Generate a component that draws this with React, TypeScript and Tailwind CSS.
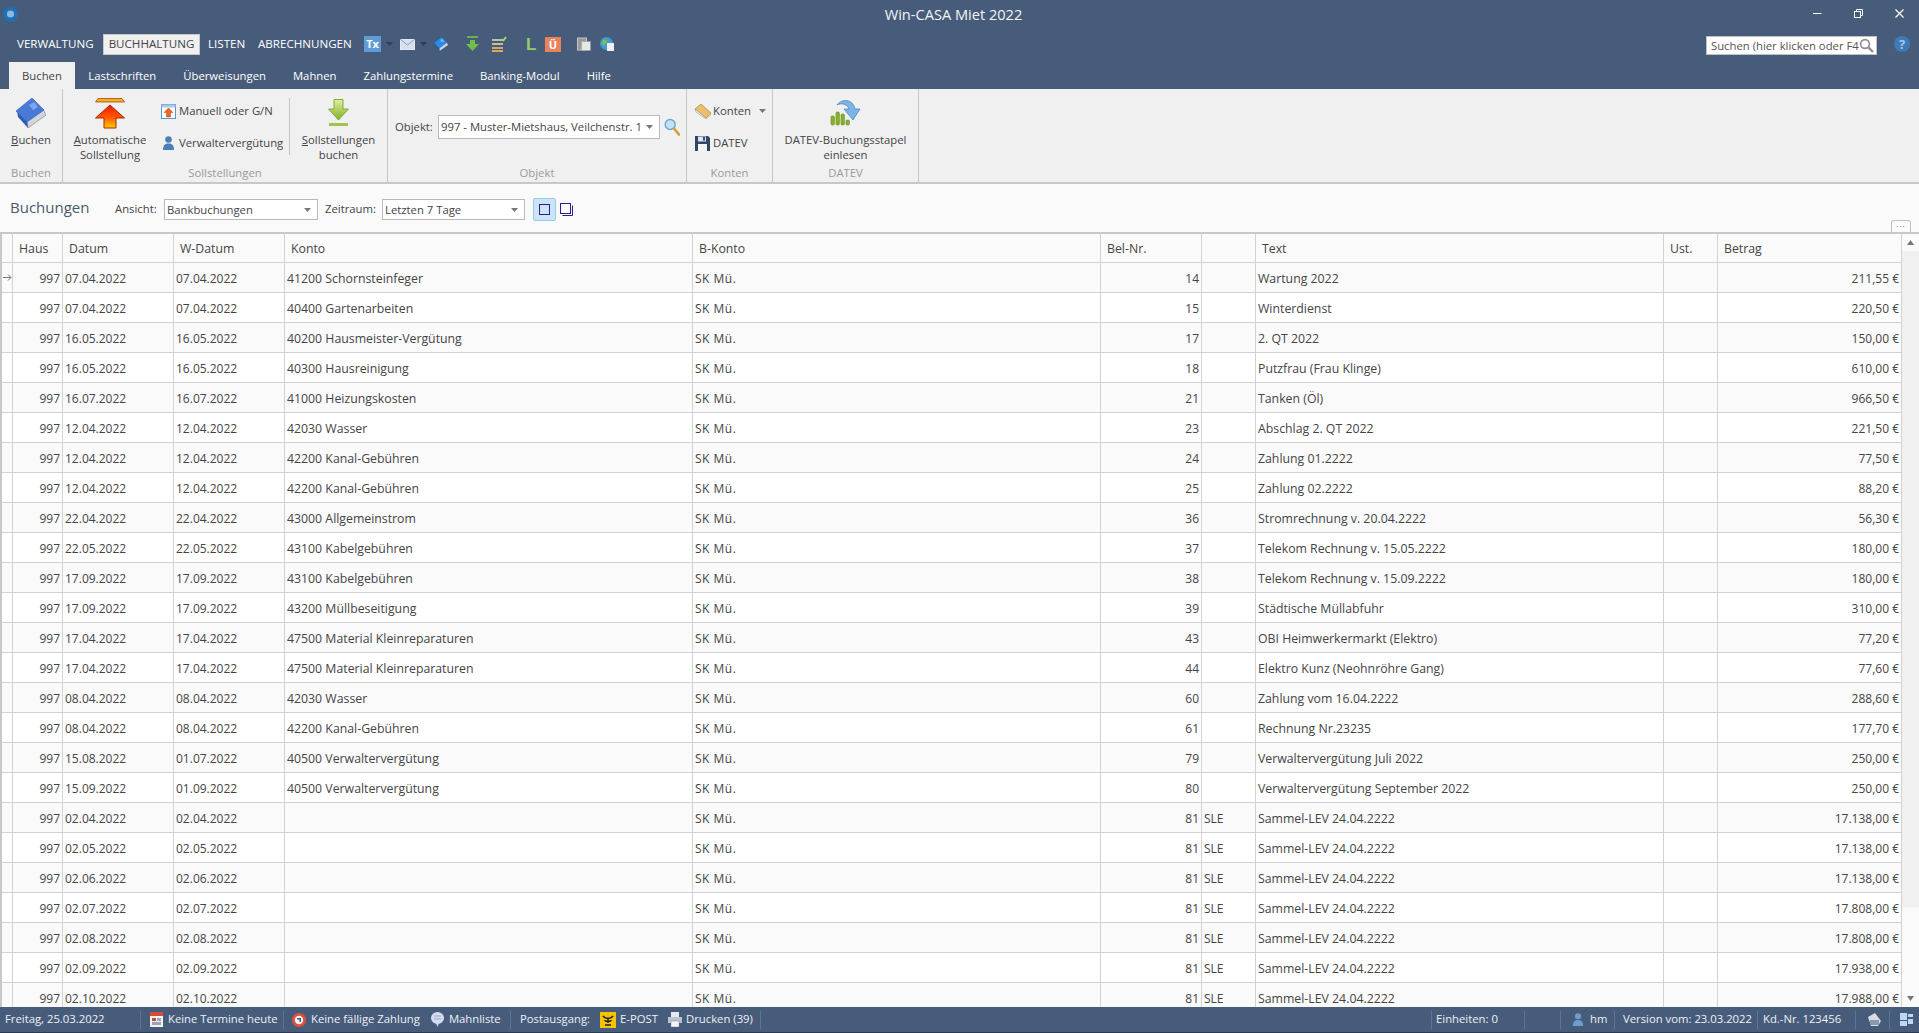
import React from "react";

const ROWS: [string, string, string, string, string, string, string][] = [
  ["07.04.2022","07.04.2022","41200 Schornsteinfeger","14","","Wartung 2022","211,55 €"],
  ["07.04.2022","07.04.2022","40400 Gartenarbeiten","15","","Winterdienst","220,50 €"],
  ["16.05.2022","16.05.2022","40200 Hausmeister-Vergütung","17","","2. QT 2022","150,00 €"],
  ["16.05.2022","16.05.2022","40300 Hausreinigung","18","","Putzfrau (Frau Klinge)","610,00 €"],
  ["16.07.2022","16.07.2022","41000 Heizungskosten","21","","Tanken (Öl)","966,50 €"],
  ["12.04.2022","12.04.2022","42030 Wasser","23","","Abschlag 2. QT 2022","221,50 €"],
  ["12.04.2022","12.04.2022","42200 Kanal-Gebühren","24","","Zahlung 01.2222","77,50 €"],
  ["12.04.2022","12.04.2022","42200 Kanal-Gebühren","25","","Zahlung 02.2222","88,20 €"],
  ["22.04.2022","22.04.2022","43000 Allgemeinstrom","36","","Stromrechnung v. 20.04.2222","56,30 €"],
  ["22.05.2022","22.05.2022","43100 Kabelgebühren","37","","Telekom Rechnung v. 15.05.2222","180,00 €"],
  ["17.09.2022","17.09.2022","43100 Kabelgebühren","38","","Telekom Rechnung v. 15.09.2222","180,00 €"],
  ["17.09.2022","17.09.2022","43200 Müllbeseitigung","39","","Städtische Müllabfuhr","310,00 €"],
  ["17.04.2022","17.04.2022","47500 Material Kleinreparaturen","43","","OBI Heimwerkermarkt (Elektro)","77,20 €"],
  ["17.04.2022","17.04.2022","47500 Material Kleinreparaturen","44","","Elektro Kunz (Neohnröhre Gang)","77,60 €"],
  ["08.04.2022","08.04.2022","42030 Wasser","60","","Zahlung vom 16.04.2222","288,60 €"],
  ["08.04.2022","08.04.2022","42200 Kanal-Gebühren","61","","Rechnung Nr.23235","177,70 €"],
  ["15.08.2022","01.07.2022","40500 Verwaltervergütung","79","","Verwaltervergütung Juli 2022","250,00 €"],
  ["15.09.2022","01.09.2022","40500 Verwaltervergütung","80","","Verwaltervergütung September 2022","250,00 €"],
  ["02.04.2022","02.04.2022","","81","SLE","Sammel-LEV 24.04.2222","17.138,00 €"],
  ["02.05.2022","02.05.2022","","81","SLE","Sammel-LEV 24.04.2222","17.138,00 €"],
  ["02.06.2022","02.06.2022","","81","SLE","Sammel-LEV 24.04.2222","17.138,00 €"],
  ["02.07.2022","02.07.2022","","81","SLE","Sammel-LEV 24.04.2222","17.808,00 €"],
  ["02.08.2022","02.08.2022","","81","SLE","Sammel-LEV 24.04.2222","17.808,00 €"],
  ["02.09.2022","02.09.2022","","81","SLE","Sammel-LEV 24.04.2222","17.938,00 €"],
  ["02.10.2022","02.10.2022","","81","SLE","Sammel-LEV 24.04.2222","17.988,00 €"],
];

const HEAD = "px-[6px] border-r border-[#d2d2d2] leading-[30px] text-[12.3px] truncate";
const CELL = "px-[2px] border-r border-[#d2d2d2] leading-[31px] truncate";
const GRID = "grid grid-cols-[11px_50px_111px_111px_408px_408px_101px_54px_408px_54px_184px]";

function Caret({ dark }: { dark?: boolean }) {
  return (
    <svg width="7" height="4" viewBox="0 0 7 4" className="shrink-0">
      <path d="M0 0h7L3.5 4z" fill={dark ? "#2f3d52" : "#777"} />
    </svg>
  );
}

function BookIcon({ size = 30, top = "#4a7ad8", light = "#7da6ea", spine = "#2f5cb5" }: { size?: number; top?: string; light?: string; spine?: string }) {
  return (
    <svg width={size} height={size} viewBox="0 0 30 30" className="shrink-0">
      <path d="M27 11 30 17 12 30 11 23z" fill="#d2d6dc" stroke="#8b93a0" strokeWidth="0.8" />
      <path d="M1 13 11 23 12 30 2 19z" fill={spine} />
      <path d="M16 0 28 12 11 24 0 13z" fill={top} stroke={spine} strokeWidth="0.6" />
      <path d="M13 7 18 4 22 9 17 12z" fill={light} />
    </svg>
  );
}

function AutoIcon() {
  return (
    <svg width="30" height="31" viewBox="0 0 30 31">
      <defs>
        <linearGradient id="autoA" x1="0" y1="0" x2="0" y2="1">
          <stop offset="0" stopColor="#f01800" />
          <stop offset="0.55" stopColor="#ff5a00" />
          <stop offset="1" stopColor="#ffc800" />
        </linearGradient>
      </defs>
      <path d="M0.5 4 3 0.5h24L29.5 4z" fill="#f0b020" stroke="#a83000" strokeWidth="0.7" />
      <path d="M15 7 29.500 20H21v10H9V20H.5z" fill="url(#autoA)" stroke="#a52a00" strokeWidth="1" />
    </svg>
  );
}

function ManualIcon() {
  return (
    <svg width="15" height="15" viewBox="0 0 15 15" className="shrink-0">
      <rect x="0.5" y="0.5" width="14" height="14" fill="#fff" stroke="#5b93d6" />
      <rect x="0.5" y="0.5" width="14" height="3" fill="#a9c8ec" />
      <path d="M7.5 4 12 8.5H9.500V13h-4V8.5H3z" fill="#f0641e" stroke="#a84a1a" strokeWidth="0.5" />
    </svg>
  );
}

function UserIcon({ color = "#4a7fb8", w = 11, h = 14 }: { color?: string; w?: number; h?: number }) {
  return (
    <svg width={w} height={h} viewBox="0 0 11 14" className="shrink-0">
      <circle cx="5.5" cy="3.5" r="3.3" fill={color} />
      <path d="M0 14c0-5 2-6.500 5.500-6.500S11 9 11 14z" fill={color} />
    </svg>
  );
}

function DownIcon() {
  return (
    <svg width="21" height="28" viewBox="0 0 21 28">
      <defs>
        <linearGradient id="downA" x1="0" y1="0" x2="0" y2="1">
          <stop offset="0" stopColor="#e2ee9c" />
          <stop offset="1" stopColor="#7fb02a" />
        </linearGradient>
      </defs>
      <path d="M6 0.5h9V10h5.500L10.500 21 .5 10H6z" fill="url(#downA)" stroke="#87a93c" />
      <rect x="1" y="24" width="19" height="3" fill="#a6c24e" />
    </svg>
  );
}

function SmallGlass() {
  return (
    <svg width="16" height="18" viewBox="0 0 16 18">
      <circle cx="6.2" cy="6.5" r="5" fill="#bfe3f7" stroke="#6aa6cf" strokeWidth="1.4" />
      <path d="M10 10.500 15 16.500" stroke="#d99a3a" strokeWidth="2.6" strokeLinecap="round" />
    </svg>
  );
}

function KontenIcon() {
  return (
    <svg width="17" height="15" viewBox="0 0 17 15" className="shrink-0">
      <path d="M1 5 7 0l10 9-5 5z" fill="#eebf6b" stroke="#a07a35" strokeWidth="0.6" />
      <path d="M1 5l11 9 5-5-.3 2-4.700 4L2 8z" fill="#f6f2e6" stroke="#8a8a80" strokeWidth="0.5" />
    </svg>
  );
}

function FloppyIcon() {
  return (
    <svg width="15" height="15" viewBox="0 0 15 15" className="shrink-0">
      <path d="M0 0h13l2 2v13H0z" fill="#2f4763" />
      <rect x="3" y="0.5" width="8" height="5" fill="#dfe6ee" />
      <rect x="3" y="8" width="9" height="7" fill="#f2f4f7" />
      <rect x="8" y="1" width="2" height="3.500" fill="#2f4763" />
    </svg>
  );
}

function DatevIcon() {
  return (
    <svg width="32" height="29" viewBox="0 0 32 29">
      <path d="M7 6C12 -1 23 0 25 10h5l-7 11-9-11h5C18 6 12 3 7 6z" fill="#7db4e6" stroke="#4e88c0" strokeWidth="0.8" />
      <rect x="1" y="17" width="3.400" height="9" rx="1.200" fill="#8ab32c" stroke="#5e8a18" strokeWidth="0.6" />
      <rect x="6" y="13" width="3.400" height="13" rx="1.200" fill="#8ab32c" stroke="#5e8a18" strokeWidth="0.6" />
      <rect x="11" y="15" width="3.400" height="11" rx="1.200" fill="#8ab32c" stroke="#5e8a18" strokeWidth="0.6" />
      <rect x="16" y="21" width="3.400" height="5" rx="1.200" fill="#8ab32c" stroke="#5e8a18" strokeWidth="0.6" />
    </svg>
  );
}

function ToolbarIcons() {
  return (
    <div className="flex items-center h-[30px] ml-[12px]">
      <div className="w-[17px] h-[16px] bg-[#5e9cd3] text-white text-[11px] font-bold leading-[16px] text-center">Tx</div>
      <span className="ml-[5px] mr-[7px] flex"><Caret dark /></span>
      <svg width="15" height="11" viewBox="0 0 15 11" className="shrink-0">
        <rect width="15" height="11" fill="#d4dff0" stroke="#fff" strokeWidth="0.6" />
        <path d="M0 0l7.500 6L15 0" fill="none" stroke="#8a9cc0" />
      </svg>
      <span className="ml-[5px] mr-[7px] flex"><Caret dark /></span>
      <BookIcon size={14} top="#2b8ae6" light="#6cb4f0" spine="#1c5fa8" />
      <svg width="15" height="16" viewBox="0 0 15 16" className="ml-[17px] shrink-0">
        <rect x="2" y="0" width="11" height="2" fill="#6fb04a" />
        <path d="M5 4h5v4h4l-6.500 7L1 8h4z" fill="#6fc04a" />
      </svg>
      <svg width="15" height="16" viewBox="0 0 15 16" className="ml-[12px] shrink-0">
        <rect x="0" y="3" width="11" height="2" fill="#b8c890" />
        <rect x="0" y="7" width="11" height="2" fill="#c0c0b0" />
        <rect x="0" y="11" width="11" height="2" fill="#d8a860" />
        <rect x="0" y="14" width="11" height="2" fill="#d8a860" />
        <path d="M11 5l3-4" stroke="#a0d080" strokeWidth="2" />
      </svg>
      <span className="ml-[19px] text-[#8fd35f] text-[17px] font-bold leading-none w-[10px] font-['Liberation_Sans',sans-serif]">L</span>
      <div className="ml-[9px] w-[16px] h-[15px] bg-[#e8835a] text-white text-[11px] font-bold leading-[15px] text-center">Ü</div>
      <svg width="14" height="14" viewBox="0 0 14 14" className="ml-[16px] shrink-0">
        <rect x="0.5" y="1" width="9" height="12" fill="#9a9a9a" stroke="#c4c4c4" />
        <rect x="4.500" y="4.500" width="9" height="9" fill="#e6e6e6" stroke="#9a9a9a" strokeWidth="0.5" />
      </svg>
      <svg width="14" height="14" viewBox="0 0 14 14" className="ml-[9px] shrink-0">
        <circle cx="6.500" cy="6.500" r="6.500" fill="#3f9ad6" />
        <path d="M2 4c2-2 4-2 5 0s-2 2-2 4-3 0-3-4z" fill="#7cc24a" />
        <rect x="7" y="6" width="7" height="8" fill="#eef0f4" />
      </svg>
    </div>
  );
}

function BigBtn({ icon, children, w }: { icon: React.ReactNode; children: React.ReactNode; w: string }) {
  return (
    <div className={`flex flex-col items-center ${w}`}>
      <div className="h-[38px] shrink-0 flex items-center justify-center">{icon}</div>
      <div className="text-center leading-[15px] whitespace-nowrap">{children}</div>
    </div>
  );
}

function Group({ label, w, children }: { label: string; w: string; children: React.ReactNode }) {
  return (
    <div className={`${w} shrink-0 flex flex-col border-r border-[#c6c6c6] h-full`}>
      <div className="h-[75px] pt-[5px] flex">{children}</div>
      <div className="text-center text-[#9a9a9a] leading-[18px]">{label}</div>
    </div>
  );
}

function Combo({ text, w }: { text: string; w: string }) {
  return (
    <div className={`${w} bg-white border border-[#b9b9b9] flex items-center pl-[2px] pr-[6px] justify-between text-[#444]`}>
      <span className="truncate leading-[16px]">{text}</span>
      <Caret />
    </div>
  );
}

function Sep({ w, children, className = "" }: { w: string; children?: React.ReactNode; className?: string }) {
  return (
    <div className={`${w} shrink-0 h-[18px] border-r border-[#5f7593] flex items-center whitespace-nowrap ${className}`}>
      {children}
    </div>
  );
}

export default function App() {
  return (
    <div className="w-[1919px] h-[1033px] overflow-hidden flex flex-col bg-[#fafafa] text-[11.3px] text-[#444] font-['Open_Sans','Noto_Sans',sans-serif]">
      {/* Title + menu + tabs */}
      <header className="h-[89px] shrink-0 bg-[#475c7a] text-white flex flex-col">
        <div className="h-[28px] flex items-center">
          <div className="flex-1 pl-[3px]">
            <svg width="15" height="15" viewBox="0 0 15 15">
              <circle cx="7.500" cy="7.500" r="7.500" fill="#1f6fb4" />
              <circle cx="7.500" cy="7" r="3.600" fill="#8fb8dc" />
            </svg>
          </div>
          <div className="text-[14.6px] text-[#f2f4f7] leading-none">Win-CASA Miet 2022</div>
          <div className="flex-1 flex justify-end items-center pr-[15px] gap-[32px] -mt-[2px]">
            <svg width="9" height="9" viewBox="0 0 9 9"><path d="M0 4.500h8.500" stroke="#fff" /></svg>
            <svg width="9" height="9" viewBox="0 0 9 9" fill="none" stroke="#fff"><rect x="0.5" y="2.500" width="6" height="6" /><path d="M2.500 2.500v-2h6v6h-2" /></svg>
            <svg width="9" height="9" viewBox="0 0 9 9" stroke="#fff" strokeWidth="1.200"><path d="M.5.5l8 8M8.500.5l-8 8" /></svg>
          </div>
        </div>
        <div className="h-[32px] flex items-center pl-[17px] text-[11.6px]">
          <span className="w-[86px] leading-none">VERWALTUNG</span>
          <span className="w-[97px] h-[21px] bg-[#f0f0f0] border border-[#c8c8c8] text-[#444] text-center leading-[18px]">BUCHHALTUNG</span>
          <span className="ml-[8px] w-[50px] leading-none">LISTEN</span>
          <span className="w-[94px] leading-none">ABRECHNUNGEN</span>
          <ToolbarIcons />
          <div className="flex-1" />
          <div className="w-[171px] h-[19px] mt-[3px] bg-white border border-[#c0c0c0] text-[#555] text-[11.3px] flex items-center justify-between pl-[4px] pr-[2px]">
            <span className="truncate leading-[16px]">Suchen (hier klicken oder F4</span>
            <svg width="15" height="15" viewBox="0 0 15 15" className="shrink-0" fill="none" stroke="#8c8c8c">
              <circle cx="6" cy="6" r="4.400" strokeWidth="1.600" /><path d="M9.400 9.400 14 14" strokeWidth="2.200" />
            </svg>
          </div>
          <div className="ml-[17px] mr-[9px] w-[16px] h-[16px] rounded-full bg-[#3f7ab8] text-[#a9c4e2] text-[13px] font-bold leading-[16px] text-center">?</div>
        </div>
        <div className="flex-1 flex items-end pl-[9px]">
          {["Buchen","Lastschriften","Überweisungen","Mahnen","Zahlungstermine","Banking-Modul","Hilfe"].map((t, i) => (
            <div key={t} className={i === 0 ? "h-[27px] px-[13px] bg-[#f0f0f0] text-[#444] leading-[27px]" : "h-[27px] px-[13.5px] leading-[27px]"}>{t}</div>
          ))}
        </div>
      </header>

      {/* Ribbon */}
      <div className="h-[95px] shrink-0 bg-[#f0f0f0] border-b-2 border-[#c8c8c8] flex">
        <Group label="Buchen" w="w-[63px]">
          <BigBtn w="w-full" icon={<BookIcon />}><u>B</u>uchen</BigBtn>
        </Group>
        <Group label="Sollstellungen" w="w-[325px]">
          <div className="flex w-full">
            <BigBtn w="w-[94px]" icon={<AutoIcon />}><u>A</u>utomatische<br />Sollstellung</BigBtn>
            <div className="flex flex-col w-[132px] pl-[4px] pt-[9px] gap-[16px]">
              <div className="flex items-center h-[16px]"><ManualIcon /><span className="ml-[3px] whitespace-nowrap">Manuell oder G/N</span></div>
              <div className="flex items-center h-[16px] pl-[2px]"><UserIcon /><span className="ml-[5px] whitespace-nowrap">Verwaltervergütung</span></div>
            </div>
            <div className="w-px h-[57px] mt-[4px] bg-[#c6c6c6]" />
            <BigBtn w="w-[97px]" icon={<DownIcon />}><u>S</u>ollstellungen<br />buchen</BigBtn>
          </div>
        </Group>
        <Group label="Objekt" w="w-[299px]">
          <div className="flex items-center h-[66px] pl-[7px]">
            <span className="w-[43px]">Objekt:</span>
            <Combo text="997 - Muster-Mietshaus, Veilchenstr. 1" w="w-[222px] h-[24px]" />
            <span className="ml-[4px] flex"><SmallGlass /></span>
          </div>
        </Group>
        <Group label="Konten" w="w-[86px]">
          <div className="flex flex-col pl-[7px] pt-[9px] gap-[16px]">
            <div className="flex items-center h-[16px]"><KontenIcon /><span className="ml-[2px]">Konten</span><span className="ml-[8px] flex"><Caret /></span></div>
            <div className="flex items-center h-[16px] pl-[1px]"><FloppyIcon /><span className="ml-[3px]">DATEV</span></div>
          </div>
        </Group>
        <Group label="DATEV" w="w-[146px]">
          <BigBtn w="w-full" icon={<DatevIcon />}>DATEV-Buchungsstapel<br />einlesen</BigBtn>
        </Group>
      </div>

      {/* Toolbar */}
      <div className="h-[48px] shrink-0 relative flex items-center pl-[10px] pt-[3px] bg-[#fafafa]">
        <span className="text-[15px] text-[#4a5a6e] w-[105px] -mt-[5px] leading-none">Buchungen</span>
        <span className="w-[49px]">Ansicht:</span>
        <Combo text="Bankbuchungen" w="w-[154px] h-[21px]" />
        <span className="ml-[7px] w-[57px]">Zeitraum:</span>
        <Combo text="Letzten 7 Tage" w="w-[143px] h-[21px]" />
        <div className="ml-[8px] w-[23px] h-[23px] bg-[#cce4f7] border border-[#9cc8ea] rounded-[2px] flex items-center justify-center">
          <svg width="11" height="11" viewBox="0 0 11 11"><rect x="0.5" y="0.5" width="10" height="10" fill="none" stroke="#2e1a92" /></svg>
        </div>
        <svg width="13" height="13" viewBox="0 0 13 13" className="ml-[4px]" fill="none" stroke="#2e1a92">
          <rect x="0.5" y="0.5" width="10" height="10" /><path d="M12.500 2.500v10h-10" />
        </svg>
        <div className="absolute right-[8px] top-[36px] w-[20px] h-[12px] border border-b-0 border-[#c0c0c0] rounded-t-[3px] text-[#777] text-[8px] leading-[6px] text-center tracking-[1px]">...</div>
      </div>

      {/* Table */}
      <div className="flex-1 min-h-0 flex border-t-2 border-[#c8c8c8] overflow-hidden text-[12px]">
        <div className="w-[1902px] shrink-0 border-l-2 border-[#c8c8c8] overflow-hidden">
          <div className={`${GRID} h-[29px] border-b border-[#d2d2d2] bg-[#fafafa]`}>
            <div className="border-r border-[#d2d2d2]" />
            {["Haus","Datum","W-Datum","Konto","B-Konto","Bel-Nr.","","Text","Ust.","Betrag"].map((h, i) => (
              <div key={i} className={HEAD}>{h}</div>
            ))}
          </div>
          {ROWS.map((r, i) => (
            <div key={i} className={`${GRID} h-[30px] border-b border-[#d2d2d2] ${i % 2 === 0 ? "bg-[#fafafa]" : "bg-white"}`}>
              <div className="border-r border-[#d2d2d2] flex items-center justify-center">
                {i === 0 && (
                  <svg width="9" height="7" viewBox="0 0 9 7" fill="none" stroke="#6b7a90"><path d="M0 3.500h8M5 .5l3 3-3 3" /></svg>
                )}
              </div>
              <div className={`${CELL} text-right`}>997</div>
              <div className={CELL}>{r[0]}</div>
              <div className={CELL}>{r[1]}</div>
              <div className={`${CELL} text-[12.3px]`}>{r[2]}</div>
              <div className={`${CELL} tracking-[0.5px]`}>SK Mü.</div>
              <div className={`${CELL} text-right`}>{r[3]}</div>
              <div className={CELL}>{r[4]}</div>
              <div className={`${CELL} text-[12.3px]`}>{r[5]}</div>
              <div className={CELL} />
              <div className={`${CELL} text-right`}>{r[6]}</div>
            </div>
          ))}
        </div>
        <div className="w-[17px] shrink-0 flex flex-col bg-[#fafafa]">
          <div className="h-[17px] flex items-center justify-center">
            <svg width="7" height="5" viewBox="0 0 7 5"><path d="M3.500 0 7 5H0z" fill="#777" /></svg>
          </div>
          <div className="flex-1 bg-[#f0f0f0]" />
          <div className="h-[100px] flex items-end justify-center pb-[6px]">
            <svg width="7" height="5" viewBox="0 0 7 5"><path d="M0 0h7L3.500 5z" fill="#777" /></svg>
          </div>
        </div>
      </div>

      {/* Status bar */}
      <footer className="h-[26px] shrink-0 bg-[#475c7a] border-b border-[#2c3a50] flex items-center text-[#eef1f5]">
        <Sep w="w-[141px]" className="pl-[5px]">Freitag, 25.03.2022</Sep>
        <Sep w="w-[143px]" className="pl-[9px]">
          <svg width="13" height="15" viewBox="0 0 13 15" className="shrink-0"><rect width="13" height="15" fill="#f4f4f4" /><rect width="13" height="4" fill="#d84a3a" /><rect x="2" y="6" width="4" height="3" fill="#c84a3a" /><rect x="7" y="6" width="4" height="3" fill="#9aa6b8" /><rect x="2" y="10" width="9" height="3" fill="#9aa6b8" /></svg>
          <span className="ml-[5px]">Keine Termine heute</span>
        </Sep>
        <div className="w-[226px] shrink-0 flex items-center pl-[8px] whitespace-nowrap">
          <svg width="14" height="14" viewBox="0 0 14 14" className="shrink-0"><circle cx="7" cy="7" r="7" fill="#e0503c" /><circle cx="7" cy="7" r="4.200" fill="#f4f4f4" /><path d="M5 5h4v4H7.500V6.500H5z" fill="#4a5a6e" /></svg>
          <span className="ml-[5px]">Keine fällige Zahlung</span>
          <svg width="13" height="15" viewBox="0 0 13 15" className="ml-[11px] shrink-0"><ellipse cx="6.500" cy="6" rx="6.500" ry="6" fill="#d4dcf0" /><path d="M5 11h3l-1.500 4z" fill="#d4dcf0" /><path d="M3 4h7M3 7h7" stroke="#9aa6c8" /></svg>
          <span className="ml-[5px]">Mahnliste</span>
        </div>
        <Sep w="w-[251px]" className="border-l pl-[9px]">
          <span className="w-[80px]">Postausgang:</span>
          <div className="w-[16px] h-[16px] bg-[#f5c400] flex items-center justify-center shrink-0">
            <svg width="12" height="12" viewBox="0 0 12 12" fill="none" stroke="#222" strokeWidth="1.500"><path d="M1 2c2 3 8 3 10 0M6 4v5M3 11h6M3 6c0 2 6 2 6 0" /></svg>
          </div>
          <span className="ml-[4px] w-[48px]">E-POST</span>
          <svg width="14" height="15" viewBox="0 0 14 15" className="shrink-0"><rect x="3" y="0" width="8" height="5" fill="#e6eaf0" /><rect x="0" y="5" width="14" height="6" fill="#b8c2d0" /><rect x="3" y="9" width="8" height="6" fill="#f4f6f8" stroke="#7a8aa0" strokeWidth="0.5" /></svg>
          <span className="ml-[4px]">Drucken (39)</span>
        </Sep>
        <div className="flex-1 h-[18px] border-r border-[#5f7593]" />
        <Sep w="w-[93px]" className="pl-[4px]">Einheiten: 0</Sep>
        <Sep w="w-[36px]" />
        <Sep w="w-[54px]" className="pl-[11px]">
          <UserIcon color="#6d9cd0" w={12} h={13} />
          <span className="ml-[6px]">hm</span>
        </Sep>
        <Sep w="w-[143px]" className="pl-[8px]">Version vom: 23.03.2022</Sep>
        <Sep w="w-[98px]" className="pl-[5px]">Kd.-Nr. 123456</Sep>
        <Sep w="w-[34px]" className="pl-[11px]">
          <svg width="14" height="13" viewBox="0 0 14 13" className="shrink-0"><path d="M1 4 8 0l6 8-3 5H4z" fill="#d8dce4" /><path d="M3 7h9v5H3z" fill="#8a98ac" /></svg>
        </Sep>
        <div className="w-[29px] shrink-0 pl-[10px] flex items-center">
          <svg width="13" height="13" viewBox="0 0 13 13" fill="#bcd8f4" className="shrink-0"><rect width="7" height="7" /><rect x="8" y="1" width="5" height="3" /><rect x="8" y="6" width="5" height="5" /><rect y="8" width="7" height="5" /></svg>
        </div>
      </footer>
    </div>
  );
}
